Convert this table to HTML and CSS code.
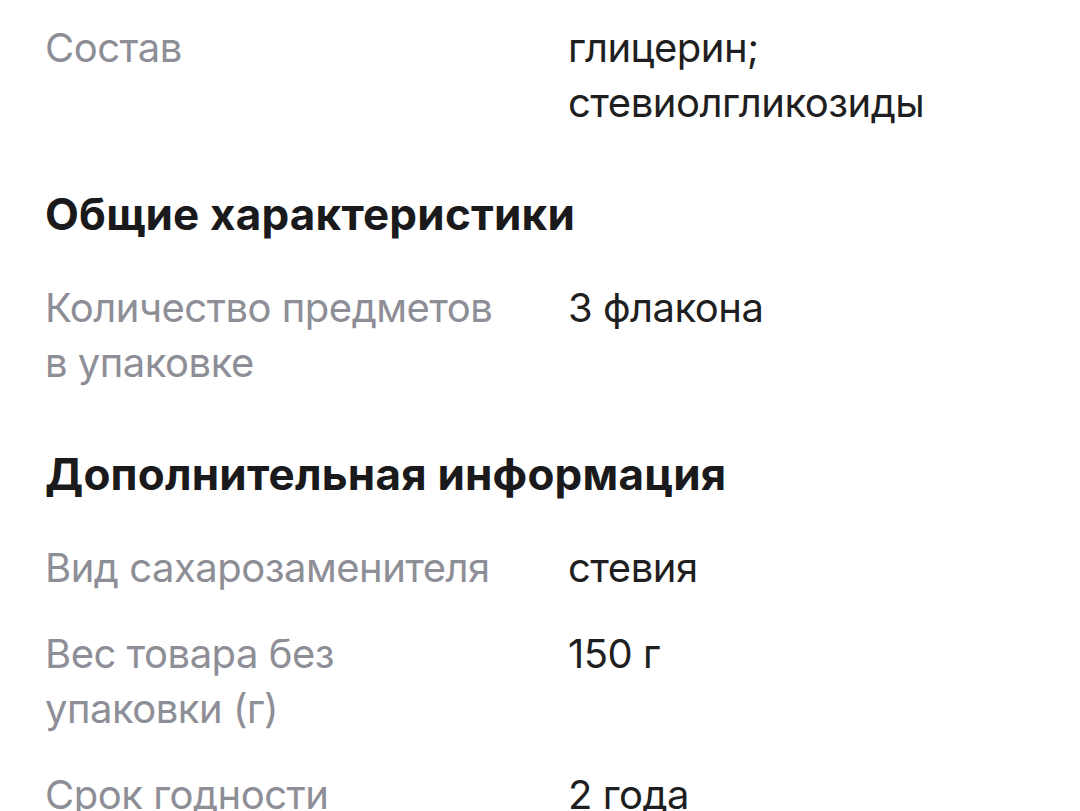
FILE: index.html
```html
<!DOCTYPE html>
<html lang="ru">
<head>
<meta charset="utf-8">
<link rel="stylesheet" href="styles.css">
</head>
<body>
<div class="page">
  <dl class="specs">
    <div class="row"><dt>Состав</dt><dd>глицерин;<br>стевиолгликозиды</dd></div>
  </dl>
  <h2 class="title">Общие характеристики</h2>
  <dl class="specs">
    <div class="row"><dt>Количество предметов в упаковке</dt><dd>3 флакона</dd></div>
  </dl>
  <h2 class="title">Дополнительная информация</h2>
  <dl class="specs">
    <div class="row"><dt>Вид сахарозаменителя</dt><dd>стевия</dd></div>
    <div class="row"><dt>Вес товара без упаковки (г)</dt><dd>150 г</dd></div>
    <div class="row"><dt>Срок годности</dt><dd>2 года</dd></div>
  </dl>
</div>
</body>
</html>
```

FILE: styles.css
```css
html, body {
  margin: 0;
  padding: 0;
  background: #ffffff;
}
body {
  font-family: Inter, "Noto Sans", sans-serif;
  -webkit-font-smoothing: antialiased;
}
.page {
  padding: 20px 45px 0 45px;
  height: 811px;
  overflow: hidden;
  box-sizing: border-box;
}
.specs {
  margin: 0;
  display: flex;
  flex-direction: column;
  gap: 31px;
}
.row {
  display: grid;
  grid-template-columns: 470px 1fr;
  column-gap: 53px;
}
dt, dd {
  margin: 0;
  font-size: 40px;
  line-height: 55px;
  font-weight: 400;
  letter-spacing: -0.5px;
}
dt {
  color: #8e8e96;
}
dd {
  color: #1f1f22;
}
.title {
  margin: 57px 0 38px 0;
  font-size: 44px;
  line-height: 55px;
  font-weight: 700;
  letter-spacing: 0.2px;
  color: #1a1a1c;
}
```
